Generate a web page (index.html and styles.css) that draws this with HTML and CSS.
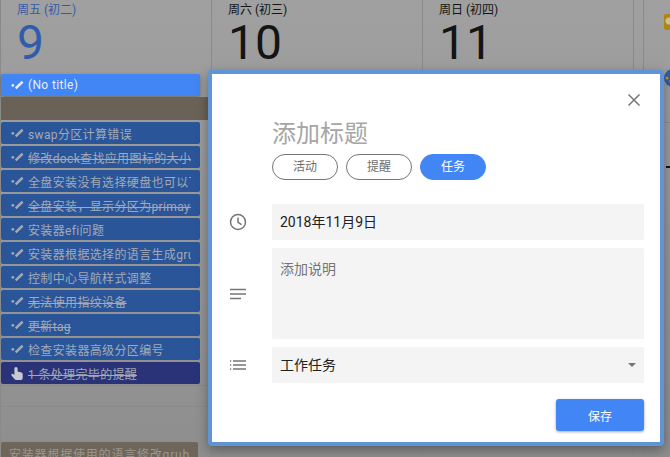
FILE: index.html
```html
<!DOCTYPE html>
<html>
<head>
    <meta charset="UTF-8">
    <title>添加日程</title>
    <link rel="stylesheet" href="styles.css">
</head>
<body>
    <div class="calendar">
        <div class="day">
            <div class="day-head today">
                <div class="day-name">周五 (初二)</div>
                <div class="day-num">9</div>
            </div>
            <div class="event new"><svg class="tick" viewBox="0 0 14 10"><circle cx="2" cy="5.5" r="1.5"/><path d="M5 8.6 L12.5 1.5" /></svg><span>(No title)</span></div>
            <div class="busy-band"></div>
            <div class="events">
                <div class="event"><svg class="tick" viewBox="0 0 14 10"><circle cx="2" cy="5.5" r="1.5"/><path d="M5 8.6 L12.5 1.5" /></svg><span>swap分区计算错误</span></div>
                <div class="event done"><svg class="tick" viewBox="0 0 14 10"><circle cx="2" cy="5.5" r="1.5"/><path d="M5 8.6 L12.5 1.5" /></svg><span>修改dock查找应用图标的大小的问题</span></div>
                <div class="event"><svg class="tick" viewBox="0 0 14 10"><circle cx="2" cy="5.5" r="1.5"/><path d="M5 8.6 L12.5 1.5" /></svg><span>全盘安装没有选择硬盘也可以下一步</span></div>
                <div class="event done"><svg class="tick" viewBox="0 0 14 10"><circle cx="2" cy="5.5" r="1.5"/><path d="M5 8.6 L12.5 1.5" /></svg><span>全盘安装，显示分区为primay的问题</span></div>
                <div class="event"><svg class="tick" viewBox="0 0 14 10"><circle cx="2" cy="5.5" r="1.5"/><path d="M5 8.6 L12.5 1.5" /></svg><span>安装器efi问题</span></div>
                <div class="event"><svg class="tick" viewBox="0 0 14 10"><circle cx="2" cy="5.5" r="1.5"/><path d="M5 8.6 L12.5 1.5" /></svg><span>安装器根据选择的语言生成grub配置</span></div>
                <div class="event"><svg class="tick" viewBox="0 0 14 10"><circle cx="2" cy="5.5" r="1.5"/><path d="M5 8.6 L12.5 1.5" /></svg><span>控制中心导航样式调整</span></div>
                <div class="event done"><svg class="tick" viewBox="0 0 14 10"><circle cx="2" cy="5.5" r="1.5"/><path d="M5 8.6 L12.5 1.5" /></svg><span>无法使用指纹设备</span></div>
                <div class="event done"><svg class="tick" viewBox="0 0 14 10"><circle cx="2" cy="5.5" r="1.5"/><path d="M5 8.6 L12.5 1.5" /></svg><span>更新tag</span></div>
                <div class="event"><svg class="tick" viewBox="0 0 14 10"><circle cx="2" cy="5.5" r="1.5"/><path d="M5 8.6 L12.5 1.5" /></svg><span>检查安装器高级分区编号</span></div>
                <div class="event reminder done"><svg class="hand" viewBox="0 0 12 14"><path d="M3.4 2 a1.6 1.6 0 0 1 3.2 0 V5 L10.5 6 Q11.7 6.4 11.7 8 V11 Q11.7 13.6 9 13.6 H5.5 Q4 13.6 3 12 L0.4 8.8 Q0.2 6.8 2 7.5 L3.4 8.5 Z"/></svg><span>1 条处理完毕的提醒</span></div>
            </div>
            <div class="hour-line first"></div>
            <div class="hour-line"></div>
            <div class="event later"><span>安装器根据使用的语言修改grub</span></div>
        </div>
        <div class="day">
            <div class="day-head">
                <div class="day-name">周六 (初三)</div>
                <div class="day-num">10</div>
            </div>
        </div>
        <div class="day">
            <div class="day-head">
                <div class="day-name">周日 (初四)</div>
                <div class="day-num">11</div>
            </div>
        </div>
        <div class="gutter"></div>
        <div class="side-rail">
            <div class="rail-bulb"></div>
            <svg class="rail-dot" viewBox="0 0 27 18"><circle cx="9" cy="9" r="9" fill="#2f5cab"/><circle cx="3" cy="9" r="1.6" fill="#c79a12"/><circle cx="8" cy="12" r="2.4" fill="#c9c9d2"/></svg>
            <div class="rail-line"></div>
            <div class="rail-dash"></div>
        </div>
    </div>

    <div class="dialog">
        <button class="close"><svg viewBox="0 0 12 12"><path d="M0.5 0.5 L11.5 11.5 M11.5 0.5 L0.5 11.5"/></svg></button>
        <div class="title">添加标题</div>
        <div class="types">
            <div class="type">活动</div>
            <div class="type">提醒</div>
            <div class="type on">任务</div>
        </div>
        <div class="row date-row">
            <svg class="row-icon clock" viewBox="0 0 24 24"><circle cx="12" cy="12" r="7.5"/><path d="M12 7.4 V12.3 L15.6 14.6"/></svg>
            <div class="field">2018年11月9日</div>
        </div>
        <div class="row desc-row">
            <svg class="row-icon" viewBox="0 0 24 24"><path d="M4 7.5 H20 M4 12 H20 M4 16.5 H15"/></svg>
            <div class="field desc">添加说明</div>
        </div>
        <div class="row list-row">
            <svg class="row-icon" viewBox="0 0 24 24"><path d="M7 8 H20 M7 12 H20 M7 16 H20 M4 8 H5.2 M4 12 H5.2 M4 16 H5.2"/></svg>
            <div class="field select">工作任务<span class="caret"></span></div>
        </div>
        <div class="actions"><button class="save">保存</button></div>
    </div>
</body>
</html>
```

FILE: styles.css
```css
html, body { margin: 0; height: 100%; overflow: hidden; }
body { font-family: Roboto, "Noto Sans CJK SC", sans-serif; background: linear-gradient(#a0a0a0, #8e8e8e); }

.calendar { display: flex; height: 457px; }
.day { width: 211px; box-sizing: border-box; border-right: 1px solid #8a8a8a; flex: none; }
.day:first-child { width: 212px; border-left: 1px solid #8a8a8a; }
.day-head { height: 74px; padding: 1px 0 0 16px; box-sizing: border-box; color: #141414; }
.day-name { font-size: 12px; line-height: 18px; }
.day-num { font-size: 48px; line-height: 48px; }
.today { color: #2f5cab; }
.gutter { width: 9px; flex: none; border-right: 1px solid #8a8a8a; }
.side-rail { flex: 1; overflow: hidden; }
.rail-bulb { width: 7px; height: 16px; margin: 14px 0 0 20px; background: radial-gradient(circle at 5px 7px, #c9c0a0 3px, #b0860c 4px); border-radius: 2px 0 0 2px; }
.rail-dot { display: block; width: 27px; height: 18px; margin: 39px 0 0 20px; }
.rail-line { height: 1px; margin: 35px 0 0 21px; background: #8a8a8a; }
.rail-dash { width: 6px; height: 2px; margin: 43px 0 0 22px; background: #141414; }

.event { display: flex; align-items: center; height: 22px; width: 199px; padding-left: 10px; box-sizing: border-box; background: #2b5599; color: #a3aab5; border-radius: 2px; font-size: 12px; white-space: nowrap; overflow: hidden; letter-spacing: 0.35px; }
.event span { overflow: hidden; margin-right: 9px; white-space: nowrap; }
.event.done span { text-decoration: line-through; }
.events { display: flex; flex-direction: column; gap: 2px; }
.event.new { background: #4285f4; color: #e6eefc; box-shadow: 0 2px 4px rgba(0,0,0,.3); }
.event.reminder { background: #2a3278; }
.event.later { background: #6e665b; color: #9c968c; margin-top: 35px; padding-left: 8px; width: 197px; letter-spacing: 0.8px; }
.tick { width: 13px; height: 10px; flex: none; margin-right: 4px; fill: currentColor; stroke: currentColor; stroke-width: 2.6; }
.tick circle { stroke: none; }
.hand { width: 12px; height: 15px; flex: none; margin-right: 5px; fill: #c9c9d2; }
.busy-band { height: 23px; margin: 1px 0 2px; width: 209px; background: #6b6257; }
.hour-line { height: 20px; border-bottom: 1px solid #8a8a8a; }
.hour-line.first { height: 1px; }

.dialog { position: absolute; left: 208px; top: 70px; width: 448px; height: 368px; border: 4px solid #5f95d5; border-radius: 4px; background: #fff; box-shadow: 0 4px 12px rgba(0,0,0,.35); }
.close { position: absolute; right: 20px; top: 20px; width: 12px; height: 12px; padding: 0; border: 0; background: none; display: flex; }
.close svg { width: 12px; height: 12px; fill: none; stroke: #757575; stroke-width: 1.5; }
.title { margin: 43px 0 0 60px; font-size: 24px; line-height: 34px; color: #a6a6a6; }
.types { display: flex; gap: 8px; margin-left: 60px; padding-top: 3px; }
.type { width: 64px; height: 24px; line-height: 24px; border: 1px solid #757575; border-radius: 13px; text-align: center; font-size: 12px; color: #6e6e6e; }
.type.on { background: #4285f4; border-color: #4285f4; color: #fff; }
.row { display: flex; align-items: center; margin-left: 14px; }
.row-icon { width: 24px; height: 24px; flex: none; margin-right: 22px; fill: none; stroke: #757575; stroke-width: 1.3; }
.row-icon.clock { stroke-width: 1.5; }
.date-row { margin-top: 24px; }
.desc-row { margin-top: 8px; }
.list-row { margin-top: 8px; }
.field { width: 372px; height: 36px; line-height: 36px; padding-left: 8px; box-sizing: border-box; background: #f4f4f4; border-radius: 2px; font-size: 14px; color: #212121; }
.field.desc { height: 91px; line-height: 18px; padding-top: 12px; color: #757575; }
.field.select { display: flex; justify-content: space-between; align-items: center; padding-right: 8px; }
.caret { width: 0; height: 0; border: 4px solid transparent; border-top-color: #757575; border-bottom-width: 0; }
.actions { display: flex; justify-content: flex-end; padding: 16px 16px 0 0; }
.save { width: 88px; height: 32px; background: #4285f4; color: #fff; border: 0; border-radius: 3px; font-family: inherit; font-size: 12px; box-shadow: 0 1px 3px rgba(0,0,0,.35); }
```
